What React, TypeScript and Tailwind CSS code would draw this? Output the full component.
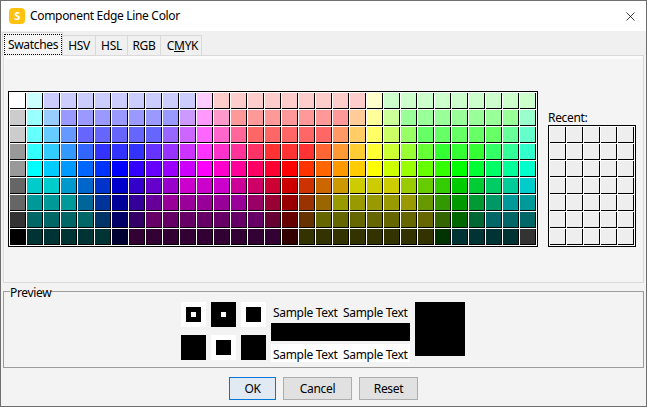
import { X } from 'lucide-react';

const swatchRows = [
  'ffffff ccffff ccccff*9 ffccff ffcccc*9 ffffcc ccffcc*9',
  'cccccc 99ffff 99ccff 9999ff*7 cc99ff ff99ff ff99cc ff9999*7 ffcc99 ffff99 ccff99 99ff99*7 99ffcc',
  'cccccc 66ffff 66ccff 6699ff 6666ff*5 9966ff cc66ff ff66ff ff66cc ff6699 ff6666*5 ff9966 ffcc66 ffff66 ccff66 99ff66 66ff66*5 66ff99 66ffcc',
  '999999 33ffff 33ccff 3399ff 3366ff 3333ff*3 6633ff 9933ff cc33ff ff33ff ff33cc ff3399 ff3366 ff3333*3 ff6633 ff9933 ffcc33 ffff33 ccff33 99ff33 66ff33 33ff33*3 33ff66 33ff99 33ffcc',
  '999999 00ffff 00ccff 0099ff 0066ff 0033ff 0000ff 3300ff 6600ff 9900ff cc00ff ff00ff ff00cc ff0099 ff0066 ff0033 ff0000 ff3300 ff6600 ff9900 ffcc00 ffff00 ccff00 99ff00 66ff00 33ff00 00ff00 00ff33 00ff66 00ff99 00ffcc',
  '666666 00cccc*2 0099cc 0066cc 0033cc 0000cc 3300cc 6600cc 9900cc cc00cc*3 cc0099 cc0066 cc0033 cc0000 cc3300 cc6600 cc9900 cccc00*3 99cc00 66cc00 33cc00 00cc00 00cc33 00cc66 00cc99 00cccc',
  '666666 009999*3 006699 003399 000099 330099 660099 990099*5 990066 990033 990000 993300 996600 999900*5 669900 339900 009900 009933 009966 009999*2',
  '333333 006666*4 003366 000066 330066 660066*7 660033 660000 663300 666600*7 336600 006600 006633 006666*3',
  '000000 003333*5 000033 330033*9 330000 333300*8 003300 003333*4 333333',
];

const swatches = swatchRows.flatMap((row) =>
  row.split(' ').flatMap((item) => {
    const [hex, count] = item.split('*');
    return Array<string>(Number(count ?? 1)).fill(`#${hex}`);
  })
);

function Swatch({ color }: { color: string }) {
  return <div className="h-4 w-4 border-r border-b border-black" style={{ backgroundColor: color }} />;
}

function SampleText() {
  return (
    <div className="flex gap-[6px] px-[2px]">
      <span className="w-[64px] whitespace-nowrap">Sample Text</span>
      <span className="w-[64px] whitespace-nowrap">Sample Text</span>
    </div>
  );
}

export default function App() {
  return (
    <div className="flex h-[407px] w-[647px] flex-col overflow-hidden border border-[#6e6e6e] bg-[#f3f3f3] font-['Noto_Sans',sans-serif] text-[12px] leading-[16px] tracking-[-0.32px] text-black">
      {/* Title bar */}
      <div className="flex h-[30px] shrink-0 items-center bg-white pr-[8px] pl-[8px]">
        <div className="flex h-4 w-4 items-center justify-center rounded-[4px] bg-[#ffc20e] text-[11px] font-bold text-white">S</div>
        <span className="ml-[5px] whitespace-nowrap">Component Edge Line Color</span>
        <X size={15} strokeWidth={1.2} color="#000000" className="ml-auto" />
      </div>

      {/* Tabs */}
      <div className="flex h-[24px] shrink-0 items-end bg-[#f0f0f0] pl-[1px]">
        <div className="relative z-10 -mb-px flex h-[24px] w-[61px] items-center justify-center border border-b-0 border-[#d9d9d9] bg-[#f4f4f4]">
          <span className="flex h-[21px] w-[58px] items-center justify-center border border-dotted border-black pl-px">Swatches</span>
        </div>
        <div className="flex h-[20px] w-[33px] items-center justify-center border-t border-r border-[#d9d9d9]">HSV</div>
        <div className="flex h-[20px] w-[32px] items-center justify-center border-t border-r border-[#d9d9d9]">HSL</div>
        <div className="flex h-[20px] w-[33px] items-center justify-center border-t border-r border-[#d9d9d9]">RGB</div>
        <div className="flex h-[20px] w-[41px] items-center justify-center border-t border-r border-[#d9d9d9] pl-[3px]">
          C<span className="underline">M</span>YK
        </div>
      </div>

      {/* Swatches panel */}
      <div className="mx-[2px] h-[228px] shrink-0 border border-[#d9d9d9] bg-[#f4f4f4]">
        <div className="flex h-full border-t-[3px] border-l border-[#fbfbfb] pt-[32px] pl-[3px]">
          <div className="grid h-[156px] w-[530px] grid-cols-[repeat(31,16px)] gap-px border border-black bg-white p-px">
            {swatches.map((color, i) => (
              <Swatch key={i} color={color} />
            ))}
          </div>
          <div className="ml-[10px] flex w-[88px] flex-col">
            <span className="mt-[19px] leading-[15px]">Recent:</span>
            <div className="grid h-[122px] grid-cols-[repeat(5,16px)] gap-px border border-black bg-white p-px">
              {Array.from({ length: 35 }).map((_, i) => (
                <Swatch key={i} color="#eeeeee" />
              ))}
            </div>
          </div>
        </div>
      </div>

      {/* Preview */}
      <fieldset className="mx-[2px] mt-px h-[84px] shrink-0 border border-[#9c9c9c] pl-[6px]">
        <legend className="box-border h-[14px] pt-[2px] leading-[14px]">Preview</legend>
        <div className="mt-[4px] ml-[171px] flex">
          <div className="grid grid-cols-[repeat(3,25px)] gap-[5px]">
            <div className="flex h-[25px] items-center justify-center bg-white">
              <div className="flex h-[15px] w-[15px] items-center justify-center bg-black">
                <div className="h-[5px] w-[5px] bg-white" />
              </div>
            </div>
            <div className="flex h-[25px] items-center justify-center bg-black">
              <div className="h-[5px] w-[5px] bg-white" />
            </div>
            <div className="flex h-[25px] items-center justify-center bg-white">
              <div className="h-[15px] w-[15px] bg-black" />
            </div>
            <div className="h-[25px] bg-black" />
            <div className="flex h-[25px] items-center justify-center bg-white">
              <div className="h-[15px] w-[15px] bg-black" />
            </div>
            <div className="h-[25px] bg-black" />
          </div>
          <div className="ml-[5px] flex w-[139px] flex-col">
            <div className="h-[21px] pt-[3px]">
              <SampleText />
            </div>
            <div className="h-[18px] bg-black" />
            <div className="mt-[3px] h-[18px] bg-white pt-[3px]">
              <SampleText />
            </div>
          </div>
          <div className="ml-[5px] h-[54px] w-[50px] bg-black" />
        </div>
      </fieldset>

      {/* Buttons */}
      <div className="mt-[9px] ml-[228px] flex gap-[7px] text-center leading-[21px]">
        <button className="h-[23px] w-[47px] border border-[#0078d7] bg-[#e1e9f2]">OK</button>
        <button className="h-[23px] w-[69px] border border-[#adadad] bg-[#e1e1e1]">Cancel</button>
        <button className="h-[23px] w-[59px] border border-[#adadad] bg-[#e1e1e1]">Reset</button>
      </div>
    </div>
  );
}
